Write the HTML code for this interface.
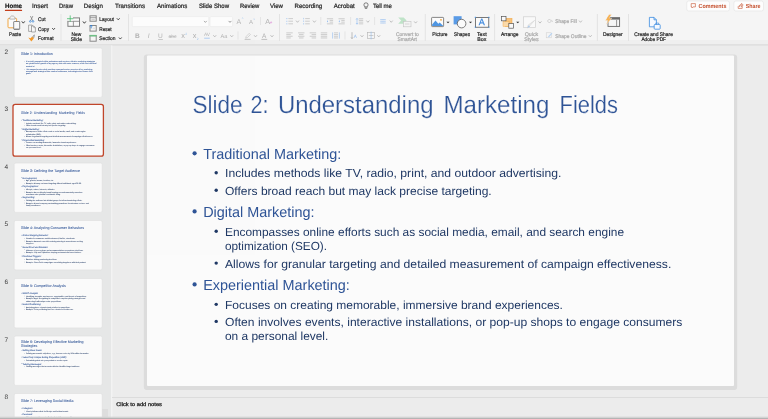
<!DOCTYPE html>
<html lang="en"><head><meta charset="utf-8"><title>PowerPoint - Slide 2: Understanding Marketing Fields</title>
<style>html,body{margin:0;padding:0;width:768px;height:419px;overflow:hidden;background:#ececec;font-family:"Liberation Sans",sans-serif}svg{display:block;position:absolute;left:0;top:0;will-change:transform;opacity:0.999}</style></head>
<body>
<svg width="768" height="419" viewBox="0 0 768 419" font-family="'Liberation Sans', sans-serif" text-rendering="geometricPrecision"><defs><filter id="bl" x="-5%" y="-5%" width="110%" height="110%"><feGaussianBlur stdDeviation="0.5"/></filter><clipPath id="sb"><rect x="0" y="46" width="110" height="371"/></clipPath></defs><rect x="0" y="0" width="768" height="419" fill="#ececec" />
<rect x="0" y="0" width="768" height="40" fill="#f5f5f5" />
<rect x="0" y="40" width="768" height="5" fill="#efefef" />
<rect x="0" y="44.4" width="768" height="1" fill="#d6d6d6" />
<text x="5" y="8.0" font-size="6.3" fill="#111" font-weight="bold" textLength="17" lengthAdjust="spacingAndGlyphs" stroke="#262626" stroke-width="0.22">Home</text>
<text x="32" y="8.0" font-size="6.3" fill="#262626" textLength="16" lengthAdjust="spacingAndGlyphs" stroke="#262626" stroke-width="0.22">Insert</text>
<text x="59" y="8.0" font-size="6.3" fill="#262626" textLength="14" lengthAdjust="spacingAndGlyphs" stroke="#262626" stroke-width="0.22">Draw</text>
<text x="83.75" y="8.0" font-size="6.3" fill="#262626" textLength="19.25" lengthAdjust="spacingAndGlyphs" stroke="#262626" stroke-width="0.22">Design</text>
<text x="115" y="8.0" font-size="6.3" fill="#262626" textLength="30" lengthAdjust="spacingAndGlyphs" stroke="#262626" stroke-width="0.22">Transitions</text>
<text x="157" y="8.0" font-size="6.3" fill="#262626" textLength="30.25" lengthAdjust="spacingAndGlyphs" stroke="#262626" stroke-width="0.22">Animations</text>
<text x="198.9" y="8.0" font-size="6.3" fill="#262626" textLength="30.1" lengthAdjust="spacingAndGlyphs" stroke="#262626" stroke-width="0.22">Slide Show</text>
<text x="239.9" y="8.0" font-size="6.3" fill="#262626" textLength="19.35" lengthAdjust="spacingAndGlyphs" stroke="#262626" stroke-width="0.22">Review</text>
<text x="270" y="8.0" font-size="6.3" fill="#262626" textLength="13" lengthAdjust="spacingAndGlyphs" stroke="#262626" stroke-width="0.22">View</text>
<text x="294.5" y="8.0" font-size="6.3" fill="#262626" textLength="27.75" lengthAdjust="spacingAndGlyphs" stroke="#262626" stroke-width="0.22">Recording</text>
<text x="333.75" y="8.0" font-size="6.3" fill="#262626" textLength="21.0" lengthAdjust="spacingAndGlyphs" stroke="#262626" stroke-width="0.22">Acrobat</text>
<text x="372.9" y="8.0" font-size="6.3" fill="#262626" textLength="19.0" lengthAdjust="spacingAndGlyphs" stroke="#262626" stroke-width="0.22">Tell me</text>
<line x1="5.4" y1="10.4" x2="21.6" y2="10.4" stroke="#c43e1c" stroke-width="1.1" stroke-linecap="round"/>
<g stroke="#333" stroke-width="0.6" fill="none"><circle cx="366" cy="4.9" r="2.1"/><path d="M365 7.1V8.3H367V7.1"/></g>
<rect x="686.75" y="1" width="42.75" height="10" fill="#fdfdfd" rx="2" stroke="#e2e2e2" stroke-width="0.6" />
<rect x="733.9" y="1" width="29.6" height="10" fill="#fdfdfd" rx="2" stroke="#e2e2e2" stroke-width="0.6" />
<path d="M691.2 3.6h4.2v3.3h-2.4l-1 1v-1h-0.8z" fill="none" stroke="#c5502e" stroke-width="0.6" stroke-linejoin="round"/>
<text x="698.5" y="8.3" font-size="5.9" fill="#c5502e" font-weight="bold" textLength="27.9" lengthAdjust="spacingAndGlyphs" >Comments</text>
<g fill="none" stroke="#c5502e" stroke-width="0.6" stroke-linejoin="round"><path d="M738.2 6.2v2.2h4v-2.2"/><path d="M739 6.6c0.3-1.6 1.3-2.2 2.6-2.2v-1l1.6 1.6l-1.6 1.6v-1c-1.1 0-1.9 0.2-2.6 1z"/></g>
<text x="745.75" y="8.3" font-size="5.9" fill="#c5502e" font-weight="bold" textLength="14.75" lengthAdjust="spacingAndGlyphs" >Share</text>
<line x1="61" y1="14" x2="61" y2="41" stroke="#dedede" stroke-width="0.8" />
<line x1="128.5" y1="14" x2="128.5" y2="41" stroke="#dedede" stroke-width="0.8" />
<line x1="279.5" y1="14" x2="279.5" y2="41" stroke="#dedede" stroke-width="0.8" />
<line x1="425.25" y1="14" x2="425.25" y2="41" stroke="#dedede" stroke-width="0.8" />
<line x1="494.6" y1="14" x2="494.6" y2="41" stroke="#dedede" stroke-width="0.8" />
<line x1="597.4" y1="14" x2="597.4" y2="41" stroke="#dedede" stroke-width="0.8" />
<line x1="628.5" y1="14" x2="628.5" y2="41" stroke="#dedede" stroke-width="0.8" />
<line x1="260.5" y1="17" x2="260.5" y2="25" stroke="#dedede" stroke-width="0.7" />
<line x1="320.75" y1="17" x2="320.75" y2="25" stroke="#dedede" stroke-width="0.7" />
<line x1="350.6" y1="17" x2="350.6" y2="25" stroke="#dedede" stroke-width="0.7" />
<line x1="374.6" y1="17" x2="374.6" y2="25" stroke="#dedede" stroke-width="0.7" />
<line x1="238" y1="31.5" x2="238" y2="39.5" stroke="#dedede" stroke-width="0.7" />
<line x1="345" y1="31.5" x2="345" y2="39.5" stroke="#dedede" stroke-width="0.7" />
<g fill="none" stroke-linejoin="round"><rect x="8" y="18.3" width="8.6" height="9.5" rx="0.9" stroke="#f2a541" stroke-width="1" fill="#fbfbfb"/><path d="M9.7 19.1V17.7L11.5 16H13.3L15.1 17.7V19.1z" stroke="#8a8a8a" stroke-width="0.6" fill="#f6f6f6"/><rect x="13.7" y="21.5" width="6" height="7.7" rx="0.5" stroke="#6a6a6a" stroke-width="0.8" fill="#fafafa"/><path d="M13.9 29.3h5.6" stroke="#555" stroke-width="0.5"/></g>
<path d="M22.05 21.65L23.3 23.15L24.55 21.65" fill="none" stroke="#2a2a2a" stroke-width="0.9" stroke-linecap="round" stroke-linejoin="round"/>
<text x="9" y="35.7" font-size="5.3" fill="#1f1f1f" textLength="12" lengthAdjust="spacingAndGlyphs" stroke="#1f1f1f" stroke-width="0.2">Paste</text>
<g fill="none" stroke="#666" stroke-width="0.6"><path d="M30.4 16l2.3 4.7M32.9 16l-2.3 4.7"/></g><circle cx="30.3" cy="21.4" r="0.85" fill="none" stroke="#2f7fd6" stroke-width="0.65"/><circle cx="33" cy="21.4" r="0.85" fill="none" stroke="#2f7fd6" stroke-width="0.65"/>
<text x="38" y="20.5" font-size="5.3" fill="#1f1f1f" textLength="7.5" lengthAdjust="spacingAndGlyphs" stroke="#1f1f1f" stroke-width="0.2">Cut</text>
<g fill="#f8f8f8" stroke="#777" stroke-width="0.6" stroke-linejoin="round"><rect x="28.6" y="25.1" width="3.6" height="6.3"/><path d="M31.5 26h2.3l1.6 1.7v4.3h-3.9z"/><path d="M33.8 26v1.7h1.6" fill="none" stroke-width="0.45"/></g>
<text x="38" y="30.6" font-size="5.3" fill="#1f1f1f" textLength="11" lengthAdjust="spacingAndGlyphs" stroke="#1f1f1f" stroke-width="0.2">Copy</text>
<path d="M52.45 28.35L53.6 29.65L54.75 28.35" fill="none" stroke="#333" stroke-width="0.85" stroke-linecap="round" stroke-linejoin="round"/>
<path d="M28.3 37.6L31.3 41.5L33.9 38.6L32.1 36.6L30.6 38.3z" fill="#f39a2d"/><path d="M32.6 36.6l2.2-1.6M33.4 37.4l1.2-0.6" stroke="#444" stroke-width="0.7"/>
<text x="38" y="39.9" font-size="5.3" fill="#1f1f1f" textLength="15.5" lengthAdjust="spacingAndGlyphs" stroke="#1f1f1f" stroke-width="0.2">Format</text>
<g fill="none" stroke="#7e7e7e" stroke-width="1"><rect x="67.9" y="17.9" width="11.6" height="8.4" fill="#fafafa"/><path d="M67.9 21.3h11.6M73.4 21.3v5" stroke-width="0.8"/></g><rect x="67" y="15.4" width="6" height="5.4" fill="#f5f5f5"/><path d="M70.2 15.4v6.4M67 18.7h6.4" stroke="#3db865" stroke-width="0.75"/>
<path d="M83.15 21.75L84.4 23.25L85.65 21.75" fill="none" stroke="#2a2a2a" stroke-width="0.9" stroke-linecap="round" stroke-linejoin="round"/>
<text x="71.6" y="35.75" font-size="5.3" fill="#1f1f1f" textLength="9.7" lengthAdjust="spacingAndGlyphs" stroke="#1f1f1f" stroke-width="0.2">New</text>
<text x="70.75" y="40.9" font-size="5.3" fill="#1f1f1f" textLength="11.25" lengthAdjust="spacingAndGlyphs" stroke="#1f1f1f" stroke-width="0.2">Slide</text>
<g fill="#f7f7f7" stroke="#878787" stroke-width="1"><rect x="90" y="15.8" width="6.2" height="5.4"/><rect x="90" y="25.5" width="6.2" height="5.6"/><rect x="90" y="35.6" width="6.2" height="5.6"/></g><path d="M90 17.7h6.2" stroke="#878787" stroke-width="0.8" fill="none"/><rect x="91.4" y="18.8" width="3.4" height="1.4" fill="#cfcfcf"/><rect x="92.6" y="27.6" width="3" height="1.6" fill="#e2e2e2"/><path d="M91.2 25v3.4M91.2 25l-1.1 1.3M91.2 25l1.1 1.3" stroke="#2f7fd6" stroke-width="0.8" fill="none"/><rect x="89.5" y="34.9" width="7.2" height="1.6" fill="#6fbf86"/>
<text x="99.2" y="20.9" font-size="5.3" fill="#1f1f1f" textLength="14.8" lengthAdjust="spacingAndGlyphs" stroke="#1f1f1f" stroke-width="0.2">Layout</text>
<path d="M117.1 18.55L118.25 19.849999999999998L119.4 18.55" fill="none" stroke="#333" stroke-width="0.85" stroke-linecap="round" stroke-linejoin="round"/>
<text x="99.2" y="30.6" font-size="5.3" fill="#1f1f1f" textLength="12.5" lengthAdjust="spacingAndGlyphs" stroke="#1f1f1f" stroke-width="0.2">Reset</text>
<text x="99.2" y="39.9" font-size="5.3" fill="#1f1f1f" textLength="16.2" lengthAdjust="spacingAndGlyphs" stroke="#1f1f1f" stroke-width="0.2">Section</text>
<path d="M119.14999999999999 37.75L120.3 39.05L121.45 37.75" fill="none" stroke="#333" stroke-width="0.85" stroke-linecap="round" stroke-linejoin="round"/>
<rect x="132.25" y="16.6" width="76.5" height="10" fill="#fdfdfd" rx="1" stroke="#e6e6e6" stroke-width="0.5" />
<rect x="210" y="16.6" width="22.6" height="10" fill="#fdfdfd" rx="1" stroke="#e6e6e6" stroke-width="0.5" />
<path d="M204.3 21.2L205.4 22.400000000000002L206.5 21.2" fill="none" stroke="#777" stroke-width="0.6" stroke-linecap="round" stroke-linejoin="round"/>
<path d="M228.9 21.2L230 22.400000000000002L231.1 21.2" fill="none" stroke="#555" stroke-width="0.6" stroke-linecap="round" stroke-linejoin="round"/>
<text x="137.5" y="38" font-size="6.6" fill="#b2b2b2" font-weight="bold" text-anchor="middle" >B</text>
<text x="148.75" y="38" font-size="6.6" fill="#b2b2b2" text-anchor="middle" font-style="italic">I</text>
<text x="160.5" y="38" font-size="6.6" fill="#b2b2b2" text-anchor="middle" text-decoration="underline">U</text>
<text x="172.5" y="37.8" font-size="5" fill="#b2b2b2" text-anchor="middle" text-decoration="line-through">abc</text>
<text x="183" y="38.2" font-size="7.4" fill="#b2b2b2" text-anchor="middle" >x</text>
<text x="186.2" y="35" font-size="3.2" fill="#9cc3ee" text-anchor="middle" >2</text>
<text x="194.6" y="38.2" font-size="7.4" fill="#b2b2b2" text-anchor="middle" >x</text>
<text x="197.6" y="39.6" font-size="3.2" fill="#9cc3ee" text-anchor="middle" >2</text>
<text x="207" y="36.4" font-size="4.8" fill="#b2b2b2" text-anchor="middle" >AV</text>
<line x1="204.2" y1="38.2" x2="209.8" y2="38.2" stroke="#8fbaf0" stroke-width="0.7" />
<path d="M213.55 35.5L214.75 36.900000000000006L215.95 35.5" fill="none" stroke="#b2b2b2" stroke-width="0.8" stroke-linecap="round" stroke-linejoin="round"/>
<text x="224" y="38.2" font-size="5.6" fill="#b2b2b2" text-anchor="middle" >Aa</text>
<path d="M230.55 35.5L231.75 36.900000000000006L232.95 35.5" fill="none" stroke="#b2b2b2" stroke-width="0.8" stroke-linecap="round" stroke-linejoin="round"/>
<path d="M245.6 38.2l0.6-1.8l3-3l1.2 1.2l-3 3z" fill="none" stroke="#bdbdbd" stroke-width="0.6"/>
<line x1="244.6" y1="39.4" x2="250.6" y2="39.4" stroke="#b2b2b2" stroke-width="0.7" />
<path d="M254.3 35.5L255.5 36.900000000000006L256.7 35.5" fill="none" stroke="#b2b2b2" stroke-width="0.8" stroke-linecap="round" stroke-linejoin="round"/>
<text x="264.25" y="37.6" font-size="6.4" fill="#b2b2b2" text-anchor="middle" >A</text>
<line x1="261.4" y1="39.4" x2="267.2" y2="39.4" stroke="#b2b2b2" stroke-width="0.8" />
<path d="M270.8 35.5L272 36.900000000000006L273.2 35.5" fill="none" stroke="#b2b2b2" stroke-width="0.8" stroke-linecap="round" stroke-linejoin="round"/>
<text x="238.8" y="24" font-size="7" fill="#b2b2b2" text-anchor="middle" >A</text>
<text x="242.6" y="19.8" font-size="3.6" fill="#9cc3ee" text-anchor="middle" >^</text>
<text x="251" y="24" font-size="6" fill="#b2b2b2" text-anchor="middle" >A</text>
<text x="254.2" y="20" font-size="2.8" fill="#9cc3ee" text-anchor="middle" >v</text>
<text x="267.6" y="24" font-size="7.2" fill="#b2b2b2" text-anchor="middle" >A</text>
<path d="M269.6 22.6l1.6-1.4l1.2 1.2l-1.6 1.4z" fill="#e6b5e2"/>
<rect x="286.4" y="18.200000000000003" width="0.9" height="0.9" fill="#8fbaf0" />
<line x1="288.4" y1="18.6" x2="293" y2="18.6" stroke="#b2b2b2" stroke-width="0.6" />
<rect x="286.4" y="20.8" width="0.9" height="0.9" fill="#8fbaf0" />
<line x1="288.4" y1="21.2" x2="293" y2="21.2" stroke="#b2b2b2" stroke-width="0.6" />
<rect x="286.4" y="23.400000000000002" width="0.9" height="0.9" fill="#8fbaf0" />
<line x1="288.4" y1="23.8" x2="293" y2="23.8" stroke="#b2b2b2" stroke-width="0.6" />
<path d="M296.3 20.900000000000002L297.5 22.3L298.7 20.900000000000002" fill="none" stroke="#b2b2b2" stroke-width="0.8" stroke-linecap="round" stroke-linejoin="round"/>
<line x1="303.6" y1="17.900000000000002" x2="303.6" y2="19.3" stroke="#8fbaf0" stroke-width="0.6" />
<line x1="305.2" y1="18.6" x2="309.8" y2="18.6" stroke="#b2b2b2" stroke-width="0.6" />
<line x1="303.6" y1="20.5" x2="303.6" y2="21.9" stroke="#8fbaf0" stroke-width="0.6" />
<line x1="305.2" y1="21.2" x2="309.8" y2="21.2" stroke="#b2b2b2" stroke-width="0.6" />
<line x1="303.6" y1="23.1" x2="303.6" y2="24.5" stroke="#8fbaf0" stroke-width="0.6" />
<line x1="305.2" y1="23.8" x2="309.8" y2="23.8" stroke="#b2b2b2" stroke-width="0.6" />
<path d="M313.2 20.900000000000002L314.4 22.3L315.59999999999997 20.900000000000002" fill="none" stroke="#b2b2b2" stroke-width="0.8" stroke-linecap="round" stroke-linejoin="round"/>
<line x1="326.9" y1="18.75" x2="333.1" y2="18.75" stroke="#b2b2b2" stroke-width="0.6" />
<line x1="329.69" y1="20.45" x2="333.1" y2="20.45" stroke="#b2b2b2" stroke-width="0.6" />
<line x1="329.69" y1="22.15" x2="333.1" y2="22.15" stroke="#b2b2b2" stroke-width="0.6" />
<line x1="326.9" y1="23.85" x2="333.1" y2="23.85" stroke="#b2b2b2" stroke-width="0.6" />
<path d="M327 20.2l1.2 1.1l-1.2 1.1z" fill="#8fbaf0"/>
<line x1="338.5" y1="18.75" x2="344.7" y2="18.75" stroke="#b2b2b2" stroke-width="0.6" />
<line x1="341.29" y1="20.45" x2="344.7" y2="20.45" stroke="#b2b2b2" stroke-width="0.6" />
<line x1="341.29" y1="22.15" x2="344.7" y2="22.15" stroke="#b2b2b2" stroke-width="0.6" />
<line x1="338.5" y1="23.85" x2="344.7" y2="23.85" stroke="#b2b2b2" stroke-width="0.6" />
<path d="M339.8 20.2l-1.2 1.1l1.2 1.1z" fill="#8fbaf0"/>
<line x1="358.8" y1="18.75" x2="363.2" y2="18.75" stroke="#b2b2b2" stroke-width="0.6" />
<line x1="358.8" y1="20.45" x2="363.2" y2="20.45" stroke="#b2b2b2" stroke-width="0.6" />
<line x1="358.8" y1="22.15" x2="363.2" y2="22.15" stroke="#b2b2b2" stroke-width="0.6" />
<line x1="358.8" y1="23.85" x2="363.2" y2="23.85" stroke="#b2b2b2" stroke-width="0.6" />
<path d="M357 18.4v5.8M356 19.6l1-1.2l1 1.2M356 23l1 1.2l1-1.2" stroke="#8fbaf0" stroke-width="0.6" fill="none"/>
<path d="M366.7 20.900000000000002L367.9 22.3L369.09999999999997 20.900000000000002" fill="none" stroke="#b2b2b2" stroke-width="0.8" stroke-linecap="round" stroke-linejoin="round"/>
<line x1="381.9" y1="19.6" x2="384.1" y2="19.6" stroke="#8fbaf0" stroke-width="0.6" />
<line x1="381.9" y1="21.3" x2="384.1" y2="21.3" stroke="#8fbaf0" stroke-width="0.6" />
<line x1="381.9" y1="23.0" x2="384.1" y2="23.0" stroke="#8fbaf0" stroke-width="0.6" />
<line x1="380.2" y1="19.6" x2="382.2" y2="19.6" stroke="#8fbaf0" stroke-width="0.6" />
<line x1="380.2" y1="21.3" x2="382.2" y2="21.3" stroke="#8fbaf0" stroke-width="0.6" />
<line x1="380.2" y1="23" x2="382.2" y2="23" stroke="#8fbaf0" stroke-width="0.6" />
<line x1="383.8" y1="19.6" x2="385.8" y2="19.6" stroke="#8fbaf0" stroke-width="0.6" />
<line x1="383.8" y1="21.3" x2="385.8" y2="21.3" stroke="#8fbaf0" stroke-width="0.6" />
<line x1="383.8" y1="23" x2="385.8" y2="23" stroke="#8fbaf0" stroke-width="0.6" />
<path d="M390.05 20.900000000000002L391.25 22.3L392.45 20.900000000000002" fill="none" stroke="#b2b2b2" stroke-width="0.8" stroke-linecap="round" stroke-linejoin="round"/>
<line x1="286.3" y1="32.85" x2="292.7" y2="32.85" stroke="#b2b2b2" stroke-width="0.6" />
<line x1="286.3" y1="34.55" x2="290.78" y2="34.55" stroke="#b2b2b2" stroke-width="0.6" />
<line x1="286.3" y1="36.25" x2="292.7" y2="36.25" stroke="#b2b2b2" stroke-width="0.6" />
<line x1="286.3" y1="37.95" x2="290.78" y2="37.95" stroke="#b2b2b2" stroke-width="0.6" />
<line x1="298.05" y1="32.85" x2="304.45" y2="32.85" stroke="#b2b2b2" stroke-width="0.6" />
<line x1="299.01" y1="34.55" x2="303.49" y2="34.55" stroke="#b2b2b2" stroke-width="0.6" />
<line x1="298.05" y1="36.25" x2="304.45" y2="36.25" stroke="#b2b2b2" stroke-width="0.6" />
<line x1="299.01" y1="37.95" x2="303.49" y2="37.95" stroke="#b2b2b2" stroke-width="0.6" />
<line x1="309.7" y1="32.85" x2="316.1" y2="32.85" stroke="#b2b2b2" stroke-width="0.6" />
<line x1="311.62" y1="34.55" x2="316.1" y2="34.55" stroke="#b2b2b2" stroke-width="0.6" />
<line x1="309.7" y1="36.25" x2="316.1" y2="36.25" stroke="#b2b2b2" stroke-width="0.6" />
<line x1="311.62" y1="37.95" x2="316.1" y2="37.95" stroke="#b2b2b2" stroke-width="0.6" />
<line x1="320.8" y1="32.85" x2="327.2" y2="32.85" stroke="#b2b2b2" stroke-width="0.6" />
<line x1="320.8" y1="34.55" x2="327.2" y2="34.55" stroke="#b2b2b2" stroke-width="0.6" />
<line x1="320.8" y1="36.25" x2="327.2" y2="36.25" stroke="#b2b2b2" stroke-width="0.6" />
<line x1="320.8" y1="37.95" x2="327.2" y2="37.95" stroke="#b2b2b2" stroke-width="0.6" />
<line x1="334.0" y1="32.85" x2="338.0" y2="32.85" stroke="#b2b2b2" stroke-width="0.6" />
<line x1="334.0" y1="34.55" x2="338.0" y2="34.55" stroke="#b2b2b2" stroke-width="0.6" />
<line x1="334.0" y1="36.25" x2="338.0" y2="36.25" stroke="#b2b2b2" stroke-width="0.6" />
<line x1="334.0" y1="37.95" x2="338.0" y2="37.95" stroke="#b2b2b2" stroke-width="0.6" />
<line x1="332.6" y1="32.4" x2="332.6" y2="38.6" stroke="#8fbaf0" stroke-width="0.6" />
<line x1="339.4" y1="32.4" x2="339.4" y2="38.6" stroke="#8fbaf0" stroke-width="0.6" />
<path d="M352 32.2v6.4M351 37.4l1 1.2l1-1.2" stroke="#999" stroke-width="0.6" fill="none"/>
<text x="355.4" y="37.6" font-size="4.6" fill="#8fbaf0" text-anchor="middle" >A</text>
<path d="M360.8 35.5L362 36.900000000000006L363.2 35.5" fill="none" stroke="#b2b2b2" stroke-width="0.8" stroke-linecap="round" stroke-linejoin="round"/>
<rect x="367.6" y="32.6" width="7" height="5.8" fill="none" stroke="#b2b2b2" stroke-width="0.6" />
<line x1="371.1" y1="31.6" x2="371.1" y2="39.4" stroke="#8fbaf0" stroke-width="0.6" />
<line x1="368.8" y1="35.5" x2="373.4" y2="35.5" stroke="#b2b2b2" stroke-width="0.6" />
<path d="M377.55 35.5L378.75 36.900000000000006L379.95 35.5" fill="none" stroke="#b2b2b2" stroke-width="0.8" stroke-linecap="round" stroke-linejoin="round"/>
<path d="M398.2 17.4h5.4l3 3.2l-3 3.2h-5.4l3-3.2z" fill="#bfe3c8"/><rect x="403.4" y="21.4" width="7.6" height="5.4" fill="#f4f4f4" stroke="#c4c4c4" stroke-width="0.6"/>
<line x1="405" y1="24" x2="409.4" y2="24" stroke="#c4c4c4" stroke-width="0.6" />
<path d="M414.40000000000003 21.7L415.6 23.099999999999998L416.8 21.7" fill="none" stroke="#b2b2b2" stroke-width="0.8" stroke-linecap="round" stroke-linejoin="round"/>
<text x="396" y="35.7" font-size="5.3" fill="#a9a9a9" textLength="22.75" lengthAdjust="spacingAndGlyphs" stroke="#a9a9a9" stroke-width="0.2">Convert to</text>
<text x="397.6" y="41.2" font-size="5.3" fill="#a9a9a9" textLength="19.4" lengthAdjust="spacingAndGlyphs" stroke="#a9a9a9" stroke-width="0.2">SmartArt</text>
<rect x="431.6" y="17.4" width="12" height="9.2" rx="0.7" fill="#fcfcfc" stroke="#727272" stroke-width="0.85"/><path d="M432.1 26.1v-1.6l3.4-4l2.8 3.2l1.4-1.3l3.4 3.3v0.4z" fill="#4f96e2"/><circle cx="441" cy="19.8" r="0.9" fill="#f3a43a"/>
<path d="M446.4 21.65H449.6L448 23.35z" fill="#2e2e2e" />
<text x="432.25" y="35.7" font-size="5.3" fill="#1f1f1f" textLength="15.25" lengthAdjust="spacingAndGlyphs" stroke="#1f1f1f" stroke-width="0.2">Picture</text>
<rect x="453.6" y="16.2" width="8" height="8.2" fill="#5a9be6"/><circle cx="461.6" cy="23.6" r="4.3" fill="#fbfbfb" stroke="#5e5e5e" stroke-width="0.8"/>
<path d="M468.9 21.65H472.1L470.5 23.35z" fill="#2e2e2e" />
<text x="454" y="35.7" font-size="5.3" fill="#1f1f1f" textLength="16" lengthAdjust="spacingAndGlyphs" stroke="#1f1f1f" stroke-width="0.2">Shapes</text>
<rect x="475.4" y="17.4" width="13.4" height="9.8" fill="#fbfbfb" stroke="#444" stroke-width="0.7"/>
<rect x="474.79999999999995" y="16.799999999999997" width="1.2" height="1.2" fill="#4a90d9" />
<rect x="488.2" y="16.799999999999997" width="1.2" height="1.2" fill="#4a90d9" />
<rect x="474.79999999999995" y="26.599999999999998" width="1.2" height="1.2" fill="#4a90d9" />
<rect x="488.2" y="26.599999999999998" width="1.2" height="1.2" fill="#4a90d9" />
<text x="481.8" y="25.4" font-size="9" fill="#3b87dd" text-anchor="middle" stroke="#3b87dd" stroke-width="0.25">A</text>
<text x="481.75" y="35.7" font-size="5.3" fill="#1f1f1f" text-anchor="middle" stroke="#1f1f1f" stroke-width="0.2">Text</text>
<text x="481.75" y="41.2" font-size="5.3" fill="#1f1f1f" text-anchor="middle" stroke="#1f1f1f" stroke-width="0.2">Box</text>
<rect x="505.6" y="18.4" width="6.4" height="8" fill="#f7c27a" stroke="#f0a23c" stroke-width="0.5"/><rect x="503" y="21.4" width="6" height="5" fill="#fad9a8" stroke="#f0a23c" stroke-width="0.4"/><rect x="501.4" y="16.4" width="4.6" height="4.4" fill="#fafafa" stroke="#555" stroke-width="0.7"/><rect x="508.8" y="23.6" width="4.6" height="4.6" fill="#fafafa" stroke="#555" stroke-width="0.7"/>
<path d="M516.15 21.65H519.35L517.75 23.35z" fill="#2e2e2e" />
<text x="500.9" y="35.7" font-size="5.3" fill="#1f1f1f" textLength="17.5" lengthAdjust="spacingAndGlyphs" stroke="#1f1f1f" stroke-width="0.2">Arrange</text>
<rect x="523.4" y="16.8" width="12.2" height="10.8" fill="#f9f9f9" stroke="#cfcfcf" stroke-width="0.7"/><path d="M534.6 20.4l-5 5.6l-2.2 2l0.8-3z" fill="#eee" stroke="#ccc" stroke-width="0.5"/><path d="M527.4 28l1.2-2.4l1.6 1z" fill="#a9c9ee"/>
<path d="M538.8 21.7L540 23.099999999999998L541.2 21.7" fill="none" stroke="#b2b2b2" stroke-width="0.8" stroke-linecap="round" stroke-linejoin="round"/>
<text x="531.5" y="35.7" font-size="5.3" fill="#a9a9a9" text-anchor="middle" stroke="#a9a9a9" stroke-width="0.2">Quick</text>
<text x="531.5" y="41.2" font-size="5.3" fill="#a9a9a9" text-anchor="middle" stroke="#a9a9a9" stroke-width="0.2">Styles</text>
<path d="M547.4 21l2-2l2 2l-2 2z" fill="none" stroke="#bbb" stroke-width="0.6"/><path d="M551.6 20.4c0.8 0.2 0.8 1 0.6 1.6" stroke="#bbb" stroke-width="0.6" fill="none"/>
<text x="555.25" y="23.2" font-size="5.3" fill="#a9a9a9" textLength="21.5" lengthAdjust="spacingAndGlyphs" stroke="#a9a9a9" stroke-width="0.2">Shape Fill</text>
<path d="M579.3 20.900000000000002L580.5 22.3L581.7 20.900000000000002" fill="none" stroke="#b2b2b2" stroke-width="0.8" stroke-linecap="round" stroke-linejoin="round"/>
<rect x="546.2" y="32.8" width="5" height="5" fill="none" stroke="#ccc" stroke-width="0.5"/><path d="M548 36.6l3.6-3.8l0.8 0.8l-3.6 3.8z" fill="#b8d3f2"/>
<text x="555.25" y="37.9" font-size="5.3" fill="#a9a9a9" textLength="31.25" lengthAdjust="spacingAndGlyphs" stroke="#a9a9a9" stroke-width="0.2">Shape Outline</text>
<path d="M589.05 35.5L590.25 36.900000000000006L591.45 35.5" fill="none" stroke="#b2b2b2" stroke-width="0.8" stroke-linecap="round" stroke-linejoin="round"/>
<rect x="608" y="17.8" width="11.6" height="8.6" fill="#f6f6f6" stroke="#6a6a6a" stroke-width="0.9"/><rect x="607.6" y="17.4" width="12.4" height="2.2" fill="#6a6a6a"/><path d="M616.6 20v6.4" stroke="#6a6a6a" stroke-width="0.7"/><path d="M609 14.4L605.4 20.4H608L606 24.8L611.8 18.2H609.2L611.6 14.4z" fill="#f7b050" stroke="#f5f5f5" stroke-width="0.4"/>
<text x="603" y="35.7" font-size="5.3" fill="#1f1f1f" textLength="19.75" lengthAdjust="spacingAndGlyphs" stroke="#1f1f1f" stroke-width="0.2">Designer</text>
<g fill="#f5f9ff" stroke="#3b8be0" stroke-width="0.8" stroke-linejoin="round"><path d="M649.4 17.4h4.6l2.4 2.4v7h-7z"/><path d="M654 17.4v2.4h2.4" fill="none"/><rect x="654.2" y="24.4" width="6" height="4.8" rx="0.8"/><path d="M655.8 24.4v-1.4h2.8v1.4" fill="none" stroke-width="0.6"/></g>
<text x="634.25" y="35.7" font-size="5.3" fill="#1f1f1f" textLength="38.65" lengthAdjust="spacingAndGlyphs" stroke="#1f1f1f" stroke-width="0.2">Create and Share</text>
<text x="641.4" y="41.2" font-size="5.3" fill="#1f1f1f" textLength="24.6" lengthAdjust="spacingAndGlyphs" stroke="#1f1f1f" stroke-width="0.2">Adobe PDF</text>
<rect x="0" y="45.4" width="111" height="373.6" fill="#e6e7e7" />
<rect x="111" y="45.4" width="1.3" height="373.6" fill="#f3f3f3" />
<g clip-path="url(#sb)">
<rect x="14.2" y="48" width="88" height="49.4" fill="#fafafa" rx="1.6" stroke="#dedede" stroke-width="0.6" />
<text x="4.6" y="53.9" font-size="6.5" fill="#3c3c3c" >2</text>
<g transform="translate(14.2,48) scale(0.14991) translate(-147,-55.5)" stroke-width="0.5" stroke-linejoin="round" opacity="0.9">
<text x="192.3" y="105.5" font-size="24.8" fill="#2f5496" textLength="212.2" lengthAdjust="spacingAndGlyphs" stroke="#2f5496" stroke-width="0.6" >Slide 1: Introduction</text>
<circle cx="216.2" cy="146.5" r="1.6" fill="#2f5496"/>
<text x="225" y="150.5" font-size="12.6" fill="#2f5496" textLength="461.3" lengthAdjust="spacingAndGlyphs" stroke="#2f5496" stroke-width="0.35" >It is widely accepted within professions and services, effective marketing strategies</text>
<text x="225" y="164.8" font-size="12.6" fill="#2f5496" textLength="469.7" lengthAdjust="spacingAndGlyphs" stroke="#2f5496" stroke-width="0.35" >are pivotal to the growth of any agency. But with some nuances, which our individual</text>
<text x="225" y="179.10000000000002" font-size="12.6" fill="#2f5496" textLength="57.4" lengthAdjust="spacingAndGlyphs" stroke="#2f5496" stroke-width="0.35" >content is!</text>
<circle cx="216.2" cy="198.4" r="1.6" fill="#2f5496"/>
<text x="225" y="202.40000000000003" font-size="12.6" fill="#2f5496" textLength="442.6" lengthAdjust="spacingAndGlyphs" stroke="#2f5496" stroke-width="0.35" >This comprehensive deck provides a comprehensive overview of key marketing</text>
<text x="225" y="216.70000000000005" font-size="12.6" fill="#2f5496" textLength="446.2" lengthAdjust="spacingAndGlyphs" stroke="#2f5496" stroke-width="0.35" >concepts and strategies from modern businesses, technologies to enhance their</text>
<text x="225" y="231.00000000000006" font-size="12.6" fill="#2f5496" textLength="33.6" lengthAdjust="spacingAndGlyphs" stroke="#2f5496" stroke-width="0.35" >goals.</text>
</g>
<rect x="13.0" y="104.3" width="90.4" height="51.8" fill="#fbfbfb" rx="2.2" stroke="#c0452a" stroke-width="1.3" />
<text x="4.6" y="111.4" font-size="6.5" fill="#3c3c3c" >3</text>
<g transform="translate(14.2,105.5) scale(0.14991) translate(-147,-55.5)" stroke-width="0.5" stroke-linejoin="round" opacity="0.9">
<text y="112.9" font-size="24.8" fill="#2f5496"  stroke="#2f5496" stroke-width="0.5"><tspan x="192.5" textLength="50.04" lengthAdjust="spacingAndGlyphs">Slide</tspan> <tspan x="250.4" textLength="18.08" lengthAdjust="spacingAndGlyphs">2:</tspan> <tspan x="277.9" textLength="155.61" lengthAdjust="spacingAndGlyphs">Understanding</tspan> <tspan x="443.5" textLength="105.89" lengthAdjust="spacingAndGlyphs">Marketing</tspan> <tspan x="559.6" textLength="58.26" lengthAdjust="spacingAndGlyphs">Fields</tspan></text>
<circle cx="194.6" cy="153.3" r="2.1" fill="#2f5496"/>
<text x="203.2" y="159.2" font-size="14.6" fill="#2f5496" textLength="138.1" lengthAdjust="spacingAndGlyphs" stroke="#2f5496" stroke-width="0.6" >Traditional Marketing:</text>
<circle cx="216.2" cy="172.7" r="1.7" fill="#1f3864"/>
<text x="225" y="177.1" font-size="11.7" fill="#1f3864" textLength="336.5" lengthAdjust="spacingAndGlyphs" stroke="#1f3864" stroke-width="0.35" >Includes methods like TV, radio, print, and outdoor advertising.</text>
<circle cx="216.2" cy="190.2" r="1.7" fill="#1f3864"/>
<text x="225" y="194.6" font-size="11.7" fill="#1f3864" textLength="266.7" lengthAdjust="spacingAndGlyphs" stroke="#1f3864" stroke-width="0.35" >Offers broad reach but may lack precise targeting.</text>
<circle cx="194.6" cy="211.4" r="2.1" fill="#2f5496"/>
<text x="203.2" y="217.3" font-size="14.6" fill="#2f5496" textLength="111.4" lengthAdjust="spacingAndGlyphs" stroke="#2f5496" stroke-width="0.6" >Digital Marketing:</text>
<circle cx="216.2" cy="231.2" r="1.7" fill="#1f3864"/>
<text x="225" y="235.6" font-size="11.7" fill="#1f3864" textLength="399" lengthAdjust="spacingAndGlyphs" stroke="#1f3864" stroke-width="0.35" >Encompasses online efforts such as social media, email, and search engine</text>
<text x="225" y="249.6" font-size="11.7" fill="#1f3864" textLength="102" lengthAdjust="spacingAndGlyphs" stroke="#1f3864" stroke-width="0.35" >optimization (SEO).</text>
<circle cx="216.2" cy="263.1" r="1.7" fill="#1f3864"/>
<text x="225" y="267.5" font-size="11.7" fill="#1f3864" textLength="446.3" lengthAdjust="spacingAndGlyphs" stroke="#1f3864" stroke-width="0.35" >Allows for granular targeting and detailed measurement of campaign effectiveness.</text>
<circle cx="194.6" cy="284.4" r="2.1" fill="#2f5496"/>
<text x="203.2" y="290.3" font-size="14.6" fill="#2f5496" textLength="146.7" lengthAdjust="spacingAndGlyphs" stroke="#2f5496" stroke-width="0.6" >Experiential Marketing:</text>
<circle cx="216.2" cy="304.35" r="1.7" fill="#1f3864"/>
<text x="225" y="308.75" font-size="11.7" fill="#1f3864" textLength="337.9" lengthAdjust="spacingAndGlyphs" stroke="#1f3864" stroke-width="0.35" >Focuses on creating memorable, immersive brand experiences.</text>
<circle cx="216.2" cy="321.4" r="1.7" fill="#1f3864"/>
<text x="225" y="325.8" font-size="11.7" fill="#1f3864" textLength="457.3" lengthAdjust="spacingAndGlyphs" stroke="#1f3864" stroke-width="0.35" >Often involves events, interactive installations, or pop-up shops to engage consumers</text>
<text x="225" y="340.4" font-size="11.7" fill="#1f3864" textLength="103.3" lengthAdjust="spacingAndGlyphs" stroke="#1f3864" stroke-width="0.35" >on a personal level.</text>
</g>
<rect x="14.2" y="163" width="88" height="49.4" fill="#fafafa" rx="1.6" stroke="#dedede" stroke-width="0.6" />
<text x="4.6" y="168.9" font-size="6.5" fill="#3c3c3c" >4</text>
<g transform="translate(14.2,163) scale(0.14991) translate(-147,-55.5)" stroke-width="0.5" stroke-linejoin="round" opacity="0.9">
<text x="192.3" y="112.9" font-size="24.8" fill="#2f5496" textLength="393.4" lengthAdjust="spacingAndGlyphs" stroke="#2f5496" stroke-width="0.6" >Slide 3: Defining the Target Audience</text>
<circle cx="194.6" cy="153.3" r="2.1" fill="#2f5496"/>
<text x="203.2" y="159.2" font-size="14.6" fill="#2f5496" textLength="97.0" lengthAdjust="spacingAndGlyphs" stroke="#2f5496" stroke-width="0.6" >Demographics:</text>
<circle cx="216.2" cy="173.0" r="1.7" fill="#1f3864"/>
<text x="225" y="177.39999999999998" font-size="11.7" fill="#1f3864" textLength="184.9" lengthAdjust="spacingAndGlyphs" stroke="#1f3864" stroke-width="0.35" >Age, gender, income, location, etc.</text>
<circle cx="216.2" cy="190.6" r="1.7" fill="#1f3864"/>
<text x="225" y="194.99999999999997" font-size="11.7" fill="#1f3864" textLength="370.2" lengthAdjust="spacingAndGlyphs" stroke="#1f3864" stroke-width="0.35" >Example: A luxury car brand targeting affluent individuals aged 35-55.</text>
<circle cx="194.6" cy="211.8" r="2.1" fill="#2f5496"/>
<text x="203.2" y="217.69999999999996" font-size="14.6" fill="#2f5496" textLength="105.8" lengthAdjust="spacingAndGlyphs" stroke="#2f5496" stroke-width="0.6" >Psychographics:</text>
<circle cx="216.2" cy="231.5" r="1.7" fill="#1f3864"/>
<text x="225" y="235.89999999999995" font-size="11.7" fill="#1f3864" textLength="193.6" lengthAdjust="spacingAndGlyphs" stroke="#1f3864" stroke-width="0.35" >Lifestyle, values, interests, attitudes.</text>
<circle cx="216.2" cy="249.1" r="1.7" fill="#1f3864"/>
<text x="225" y="253.49999999999994" font-size="11.7" fill="#1f3864" textLength="377.1" lengthAdjust="spacingAndGlyphs" stroke="#1f3864" stroke-width="0.35" >Example: An eco-friendly brand focusing on environmentally conscious</text>
<text x="225" y="267.79999999999995" font-size="11.7" fill="#1f3864" textLength="231.7" lengthAdjust="spacingAndGlyphs" stroke="#1f3864" stroke-width="0.35" >consumers who prioritize sustainable living.</text>
<circle cx="194.6" cy="284.6" r="2.1" fill="#2f5496"/>
<text x="203.2" y="290.49999999999994" font-size="14.6" fill="#2f5496" textLength="81.0" lengthAdjust="spacingAndGlyphs" stroke="#2f5496" stroke-width="0.6" >Segmenting:</text>
<circle cx="216.2" cy="304.3" r="1.7" fill="#1f3864"/>
<text x="225" y="308.69999999999993" font-size="11.7" fill="#1f3864" textLength="375.5" lengthAdjust="spacingAndGlyphs" stroke="#1f3864" stroke-width="0.35" >Dividing the audience into distinct groups for tailored marketing efforts.</text>
<circle cx="216.2" cy="321.9" r="1.7" fill="#1f3864"/>
<text x="225" y="326.29999999999995" font-size="11.7" fill="#1f3864" textLength="418.6" lengthAdjust="spacingAndGlyphs" stroke="#1f3864" stroke-width="0.35" >Example: A travel company customizing promotions for adventure seekers and</text>
<text x="225" y="340.59999999999997" font-size="11.7" fill="#1f3864" textLength="99.8" lengthAdjust="spacingAndGlyphs" stroke="#1f3864" stroke-width="0.35" >family vacationers.</text>
</g>
<rect x="14.2" y="220.5" width="88" height="49.4" fill="#fafafa" rx="1.6" stroke="#dedede" stroke-width="0.6" />
<text x="4.6" y="226.4" font-size="6.5" fill="#3c3c3c" >5</text>
<g transform="translate(14.2,220.5) scale(0.14991) translate(-147,-55.5)" stroke-width="0.5" stroke-linejoin="round" opacity="0.9">
<text x="192.3" y="112.9" font-size="24.8" fill="#2f5496" textLength="420.4" lengthAdjust="spacingAndGlyphs" stroke="#2f5496" stroke-width="0.6" >Slide 4: Analyzing Consumer Behaviors</text>
<circle cx="194.6" cy="153.3" r="2.1" fill="#2f5496"/>
<text x="203.2" y="159.2" font-size="14.6" fill="#2f5496" textLength="171.6" lengthAdjust="spacingAndGlyphs" stroke="#2f5496" stroke-width="0.6" >Online Shopping Behavior:</text>
<circle cx="216.2" cy="174.09" r="1.7" fill="#1f3864"/>
<text x="225" y="178.492" font-size="11.7" fill="#1f3864" textLength="328.2" lengthAdjust="spacingAndGlyphs" stroke="#1f3864" stroke-width="0.35" >Growth of e-commerce and AI-enhanced, flexible, storefronts.</text>
<circle cx="216.2" cy="192.75" r="1.7" fill="#1f3864"/>
<text x="225" y="197.148" font-size="11.7" fill="#1f3864" textLength="380.1" lengthAdjust="spacingAndGlyphs" stroke="#1f3864" stroke-width="0.35" >Example: Amazon's one-click ordering catering to convenience-seeking</text>
<text x="225" y="212.30599999999998" font-size="11.7" fill="#1f3864" textLength="52.9" lengthAdjust="spacingAndGlyphs" stroke="#1f3864" stroke-width="0.35" >shoppers.</text>
<circle cx="194.6" cy="230.47" r="2.1" fill="#2f5496"/>
<text x="203.2" y="236.368" font-size="14.6" fill="#2f5496" textLength="168.4" lengthAdjust="spacingAndGlyphs" stroke="#2f5496" stroke-width="0.6" >Social Proof and Reviews:</text>
<circle cx="216.2" cy="251.26" r="1.7" fill="#1f3864"/>
<text x="225" y="255.66" font-size="11.7" fill="#1f3864" textLength="383.1" lengthAdjust="spacingAndGlyphs" stroke="#1f3864" stroke-width="0.35" >Influence of peer reviews and recommendations on purchase decisions.</text>
<circle cx="216.2" cy="269.92" r="1.7" fill="#1f3864"/>
<text x="225" y="274.316" font-size="11.7" fill="#1f3864" textLength="370.4" lengthAdjust="spacingAndGlyphs" stroke="#1f3864" stroke-width="0.35" >Example: Yelp and TripAdvisor shaping restaurant and travel choices.</text>
<circle cx="194.6" cy="292.48" r="2.1" fill="#2f5496"/>
<text x="203.2" y="298.378" font-size="14.6" fill="#2f5496" textLength="124.3" lengthAdjust="spacingAndGlyphs" stroke="#2f5496" stroke-width="0.6" >Emotional Triggers:</text>
<circle cx="216.2" cy="313.27" r="1.7" fill="#1f3864"/>
<text x="225" y="317.66999999999996" font-size="11.7" fill="#1f3864" textLength="208.3" lengthAdjust="spacingAndGlyphs" stroke="#1f3864" stroke-width="0.35" >Emotions driving purchasing decisions.</text>
<circle cx="216.2" cy="331.93" r="1.7" fill="#1f3864"/>
<text x="225" y="336.32599999999996" font-size="11.7" fill="#1f3864" textLength="400.8" lengthAdjust="spacingAndGlyphs" stroke="#1f3864" stroke-width="0.35" >Example: Coca-Cola's campaigns associating happiness with their product.</text>
</g>
<rect x="14.2" y="278.5" width="88" height="49.4" fill="#fafafa" rx="1.6" stroke="#dedede" stroke-width="0.6" />
<text x="4.6" y="284.4" font-size="6.5" fill="#3c3c3c" >6</text>
<g transform="translate(14.2,278.5) scale(0.14991) translate(-147,-55.5)" stroke-width="0.5" stroke-linejoin="round" opacity="0.9">
<text x="192.3" y="112.9" font-size="24.8" fill="#2f5496" textLength="299.0" lengthAdjust="spacingAndGlyphs" stroke="#2f5496" stroke-width="0.6" >Slide 5: Competitor Analysis</text>
<circle cx="194.6" cy="153.3" r="2.1" fill="#2f5496"/>
<text x="203.2" y="159.2" font-size="14.6" fill="#2f5496" textLength="103.9" lengthAdjust="spacingAndGlyphs" stroke="#2f5496" stroke-width="0.6" >SWOT Analysis:</text>
<circle cx="216.2" cy="173.0" r="1.7" fill="#1f3864"/>
<text x="225" y="177.39999999999998" font-size="11.7" fill="#1f3864" textLength="405.9" lengthAdjust="spacingAndGlyphs" stroke="#1f3864" stroke-width="0.35" >Identifying strengths, weaknesses, opportunities, and threats of competitors.</text>
<circle cx="216.2" cy="190.6" r="1.7" fill="#1f3864"/>
<text x="225" y="194.99999999999997" font-size="11.7" fill="#1f3864" textLength="396.8" lengthAdjust="spacingAndGlyphs" stroke="#1f3864" stroke-width="0.35" >Example: Apple recognizing its competitor's superior pricing strategies and</text>
<text x="225" y="209.29999999999998" font-size="11.7" fill="#1f3864" textLength="236.5" lengthAdjust="spacingAndGlyphs" stroke="#1f3864" stroke-width="0.35" >addressing it with unique value propositions.</text>
<circle cx="194.6" cy="226.1" r="2.1" fill="#2f5496"/>
<text x="203.2" y="231.99999999999997" font-size="14.6" fill="#2f5496" textLength="122.7" lengthAdjust="spacingAndGlyphs" stroke="#2f5496" stroke-width="0.6" >Market Positioning:</text>
<circle cx="216.2" cy="245.8" r="1.7" fill="#1f3864"/>
<text x="225" y="250.19999999999996" font-size="11.7" fill="#1f3864" textLength="296.1" lengthAdjust="spacingAndGlyphs" stroke="#1f3864" stroke-width="0.35" >Analyzing where a brand stands relative to competitors.</text>
<circle cx="216.2" cy="263.4" r="1.7" fill="#1f3864"/>
<text x="225" y="267.79999999999995" font-size="11.7" fill="#1f3864" textLength="317.3" lengthAdjust="spacingAndGlyphs" stroke="#1f3864" stroke-width="0.35" >Example: Tesla positioning itself as a leader in electric cars.</text>
</g>
<rect x="14.2" y="336" width="88" height="49.4" fill="#fafafa" rx="1.6" stroke="#dedede" stroke-width="0.6" />
<text x="4.6" y="341.9" font-size="6.5" fill="#3c3c3c" >7</text>
<g transform="translate(14.2,336) scale(0.14991) translate(-147,-55.5)" stroke-width="0.5" stroke-linejoin="round" opacity="0.9">
<text x="192.3" y="101.0" font-size="24.8" fill="#2f5496" textLength="417.3" lengthAdjust="spacingAndGlyphs" stroke="#2f5496" stroke-width="0.6" >Slide 6: Developing Effective Marketing</text>
<text x="192.3" y="129.5" font-size="24.8" fill="#2f5496" textLength="108.1" lengthAdjust="spacingAndGlyphs" stroke="#2f5496" stroke-width="0.6" >Strategies</text>
<circle cx="194.6" cy="152.6" r="2.1" fill="#2f5496"/>
<text x="203.2" y="158.5" font-size="14.6" fill="#2f5496" textLength="129.1" lengthAdjust="spacingAndGlyphs" stroke="#2f5496" stroke-width="0.6" >Setting Clear Goals:</text>
<circle cx="216.2" cy="173.57" r="1.7" fill="#1f3864"/>
<text x="225" y="177.974" font-size="11.7" fill="#1f3864" textLength="420.0" lengthAdjust="spacingAndGlyphs" stroke="#1f3864" stroke-width="0.35" >Defining measurable objectives, e.g., increase sales by 20% within six months.</text>
<circle cx="194.6" cy="196.36" r="2.1" fill="#2f5496"/>
<text x="203.2" y="202.26299999999998" font-size="14.6" fill="#2f5496" textLength="294.8" lengthAdjust="spacingAndGlyphs" stroke="#2f5496" stroke-width="0.6" >Value Prop: Unique Selling Proposition (USP):</text>
<circle cx="216.2" cy="217.34" r="1.7" fill="#1f3864"/>
<text x="225" y="221.73699999999997" font-size="11.7" fill="#1f3864" textLength="279.3" lengthAdjust="spacingAndGlyphs" stroke="#1f3864" stroke-width="0.35" >Determining what sets your product or service apart.</text>
<circle cx="194.6" cy="240.13" r="2.1" fill="#2f5496"/>
<text x="203.2" y="246.02599999999995" font-size="14.6" fill="#2f5496" textLength="127.5" lengthAdjust="spacingAndGlyphs" stroke="#2f5496" stroke-width="0.6" >Tailoring Messages:</text>
<circle cx="216.2" cy="261.1" r="1.7" fill="#1f3864"/>
<text x="225" y="265.49999999999994" font-size="11.7" fill="#1f3864" textLength="360.4" lengthAdjust="spacingAndGlyphs" stroke="#1f3864" stroke-width="0.35" >Crafting messages that resonate with the identified target audience.</text>
</g>
<rect x="14.2" y="393.5" width="88" height="49.4" fill="#fafafa" rx="1.6" stroke="#dedede" stroke-width="0.6" />
<text x="4.6" y="399.4" font-size="6.5" fill="#3c3c3c" >8</text>
<g transform="translate(14.2,393.5) scale(0.14991) translate(-147,-55.5)" stroke-width="0.5" stroke-linejoin="round" opacity="0.9">
<text x="192.3" y="112.9" font-size="24.8" fill="#2f5496" textLength="349.7" lengthAdjust="spacingAndGlyphs" stroke="#2f5496" stroke-width="0.6" >Slide 7: Leveraging Social Media</text>
<circle cx="194.6" cy="153.3" r="2.1" fill="#2f5496"/>
<text x="203.2" y="159.2" font-size="14.6" fill="#2f5496" textLength="68.1" lengthAdjust="spacingAndGlyphs" stroke="#2f5496" stroke-width="0.6" >Instagram:</text>
<circle cx="216.2" cy="173.0" r="1.7" fill="#1f3864"/>
<text x="225" y="177.39999999999998" font-size="11.7" fill="#1f3864" textLength="285.1" lengthAdjust="spacingAndGlyphs" stroke="#1f3864" stroke-width="0.35" >Visual platform suited for lifestyle and fashion brands.</text>
<circle cx="194.6" cy="194.2" r="2.1" fill="#2f5496"/>
<text x="203.2" y="200.09999999999997" font-size="14.6" fill="#2f5496" textLength="67.4" lengthAdjust="spacingAndGlyphs" stroke="#2f5496" stroke-width="0.6" >Facebook:</text>
<circle cx="216.2" cy="213.9" r="1.7" fill="#1f3864"/>
<text x="225" y="218.29999999999995" font-size="11.7" fill="#1f3864" textLength="321.9" lengthAdjust="spacingAndGlyphs" stroke="#1f3864" stroke-width="0.35" >Wide demographic reach, effective for building communities.</text>
</g>
</g>
<rect x="102.2" y="409" width="5.8" height="8" fill="#dddddd" />
<rect x="143.8" y="54.6" width="593.4" height="335.4" rx="3" fill="#dcdcdc" filter="url(#bl)"/>
<rect x="147" y="55.5" width="587" height="330.5" fill="#fbfbfb" rx="1" />
<text y="112.9" font-size="24.8" fill="#2f5496" stroke="#fbfbfb" stroke-width="0.22"><tspan x="192.5" textLength="50.04" lengthAdjust="spacingAndGlyphs">Slide</tspan> <tspan x="250.4" textLength="18.08" lengthAdjust="spacingAndGlyphs">2:</tspan> <tspan x="277.9" textLength="155.61" lengthAdjust="spacingAndGlyphs">Understanding</tspan> <tspan x="443.5" textLength="105.89" lengthAdjust="spacingAndGlyphs">Marketing</tspan> <tspan x="559.6" textLength="58.26" lengthAdjust="spacingAndGlyphs">Fields</tspan></text>
<circle cx="194.6" cy="153.3" r="2.1" fill="#2f5496"/>
<text x="203.2" y="159.2" font-size="14.6" fill="#2f5496" textLength="138.1" lengthAdjust="spacingAndGlyphs" >Traditional Marketing:</text>
<circle cx="216.2" cy="172.7" r="1.7" fill="#1f3864"/>
<text x="225" y="177.1" font-size="11.7" fill="#1f3864" textLength="336.5" lengthAdjust="spacingAndGlyphs" >Includes methods like TV, radio, print, and outdoor advertising.</text>
<circle cx="216.2" cy="190.2" r="1.7" fill="#1f3864"/>
<text x="225" y="194.6" font-size="11.7" fill="#1f3864" textLength="266.7" lengthAdjust="spacingAndGlyphs" >Offers broad reach but may lack precise targeting.</text>
<circle cx="194.6" cy="211.4" r="2.1" fill="#2f5496"/>
<text x="203.2" y="217.3" font-size="14.6" fill="#2f5496" textLength="111.4" lengthAdjust="spacingAndGlyphs" >Digital Marketing:</text>
<circle cx="216.2" cy="231.2" r="1.7" fill="#1f3864"/>
<text x="225" y="235.6" font-size="11.7" fill="#1f3864" textLength="399" lengthAdjust="spacingAndGlyphs" >Encompasses online efforts such as social media, email, and search engine</text>
<text x="225" y="249.6" font-size="11.7" fill="#1f3864" textLength="102" lengthAdjust="spacingAndGlyphs" >optimization (SEO).</text>
<circle cx="216.2" cy="263.1" r="1.7" fill="#1f3864"/>
<text x="225" y="267.5" font-size="11.7" fill="#1f3864" textLength="446.3" lengthAdjust="spacingAndGlyphs" >Allows for granular targeting and detailed measurement of campaign effectiveness.</text>
<circle cx="194.6" cy="284.4" r="2.1" fill="#2f5496"/>
<text x="203.2" y="290.3" font-size="14.6" fill="#2f5496" textLength="146.7" lengthAdjust="spacingAndGlyphs" >Experiential Marketing:</text>
<circle cx="216.2" cy="304.35" r="1.7" fill="#1f3864"/>
<text x="225" y="308.75" font-size="11.7" fill="#1f3864" textLength="337.9" lengthAdjust="spacingAndGlyphs" >Focuses on creating memorable, immersive brand experiences.</text>
<circle cx="216.2" cy="321.4" r="1.7" fill="#1f3864"/>
<text x="225" y="325.8" font-size="11.7" fill="#1f3864" textLength="457.3" lengthAdjust="spacingAndGlyphs" >Often involves events, interactive installations, or pop-up shops to engage consumers</text>
<text x="225" y="340.4" font-size="11.7" fill="#1f3864" textLength="103.3" lengthAdjust="spacingAndGlyphs" >on a personal level.</text>
<line x1="112" y1="397.5" x2="768" y2="397.5" stroke="#dcdcdc" stroke-width="1" />
<text x="116.2" y="405.6" font-size="5.2" fill="#222" textLength="45.8" lengthAdjust="spacingAndGlyphs" stroke="#222" stroke-width="0.25">Click to add notes</text>
<rect x="0" y="417.5" width="768" height="1.5" fill="#b4b4b4" />
<rect x="0" y="416.6" width="768" height="0.9" fill="#d6d6d6" /></svg>
</body></html>
